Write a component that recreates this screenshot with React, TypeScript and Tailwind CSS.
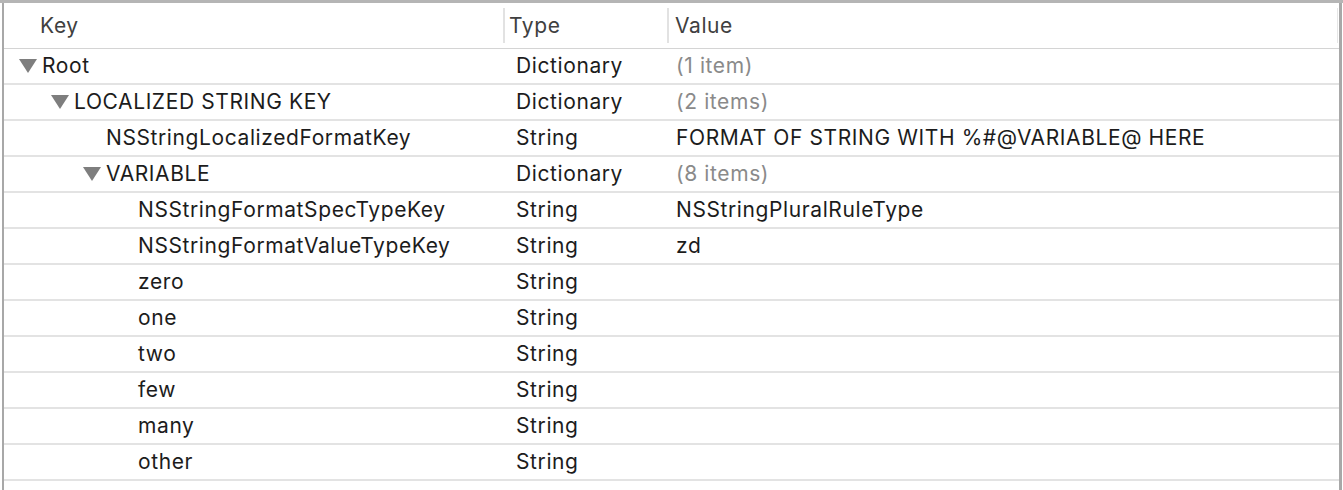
const rows = [
  { key: "Root", level: 0, open: true, type: "Dictionary", value: "(1 item)", muted: true },
  { key: "LOCALIZED STRING KEY", level: 1, open: true, type: "Dictionary", value: "(2 items)", muted: true },
  { key: "NSStringLocalizedFormatKey", level: 2, type: "String", value: "FORMAT OF STRING WITH %#@VARIABLE@ HERE" },
  { key: "VARIABLE", level: 2, open: true, type: "Dictionary", value: "(8 items)", muted: true },
  { key: "NSStringFormatSpecTypeKey", level: 3, type: "String", value: "NSStringPluralRuleType" },
  { key: "NSStringFormatValueTypeKey", level: 3, type: "String", value: "zd" },
  { key: "zero", level: 3, type: "String", value: "" },
  { key: "one", level: 3, type: "String", value: "" },
  { key: "two", level: 3, type: "String", value: "" },
  { key: "few", level: 3, type: "String", value: "" },
  { key: "many", level: 3, type: "String", value: "" },
  { key: "other", level: 3, type: "String", value: "" },
];

const pad = ["pl-[15px]", "pl-[47px]", "pl-[79px]", "pl-[111px]"];

function Disclosure() {
  return (
    <svg width="18" height="14" viewBox="0 0 18 14" className="mr-[5px] shrink-0">
      <path d="M0 0 L18 0 L9 14 Z" fill="#7e7e7e" />
    </svg>
  );
}

export default function App() {
  return (
    <div
      className="w-[1343px] h-[490px] bg-white border-t-[3px] border-[#b5b5b5] flex overflow-hidden text-[21px] tracking-[0.6px] text-[#1c1c1c]"
      style={{ fontFamily: "Inter, 'Noto Sans', sans-serif" }}
    >
      <div className="w-[2px] shrink-0" />
      <div className="flex-1 flex flex-col border-l-2 border-r-[3px] border-[#a8a8a8] mr-[1px]">
        <div className="h-[46px] flex items-center border-b border-[#d4d4d4] text-[#404040]">
          <div className="w-[499px] pl-[36px]">Key</div>
          <div className="w-[2px] h-[35px] bg-[#e2e2e2]" />
          <div className="w-[162px] pl-[4px]">Type</div>
          <div className="w-[2px] h-[35px] bg-[#e2e2e2]" />
          <div className="flex-1 pl-[6px]">Value</div>
          <div className="w-[1px] h-[35px] bg-[#e6e6e6]" />
          <div className="w-[1px]" />
        </div>
        {rows.map((r, i) => (
          <div key={i} className="h-[36px] flex items-center border-b-2 border-[#e3e3e3]">
            <div className={`w-[499px] flex items-center ${pad[r.level]}`}>
              {r.open ? <Disclosure /> : <div className="w-[23px] shrink-0" />}
              <span>{r.key}</span>
            </div>
            <div className="w-[2px]" />
            <div className="w-[162px] pl-[11px]">{r.type}</div>
            <div className="w-[2px]" />
            <div className={`flex-1 pl-[7px] ${r.muted ? "text-[#8a8a8a]" : ""}`}>{r.value}</div>
          </div>
        ))}
      </div>
    </div>
  );
}
